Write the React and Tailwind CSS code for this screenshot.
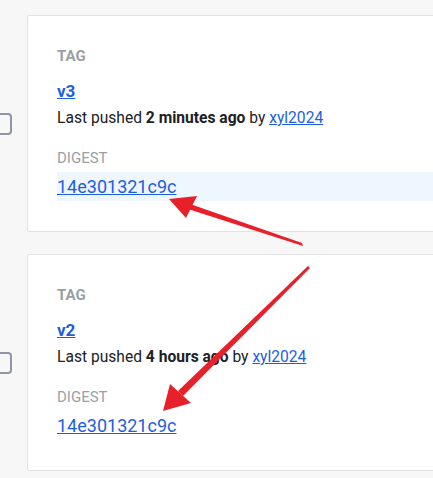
import React from "react";

const tags = [
  { tag: "v3", when: "2 minutes ago", digest: "14e301321c9c", highlight: true },
  { tag: "v2", when: "4 hours ago", digest: "14e301321c9c", highlight: false },
];

const TagCard = ({ item }) => (
  <div className="flex items-center">
    {/* checkbox, cut off by the page edge */}
    <div className="ml-[-10px] w-[22px] h-[22px] rounded-[4px] border-[2.5px] border-[#8e96a4] shrink-0"></div>
    <div className="ml-[15px] w-[440px] shrink-0 bg-white border border-[#e2e2e2] rounded-[2px] pt-[30px] pb-[30px] pl-[29px]">
      <div className="text-[15px] leading-[20px] font-bold text-[#9aa0a6] uppercase">Tag</div>
      <a className="block mt-[13px] text-[17px] leading-[24px] font-bold text-[#1d5ee0] underline">
        {item.tag}
      </a>
      <div className="mt-[5px] text-[15.6px] leading-[20px] text-[#202124]">
        Last pushed <span className="font-bold">{item.when}</span> by{" "}
        <a className="text-[#1d5ee0] underline">xyl2024</a>
      </div>
      <div className="mt-[20px] text-[15px] leading-[20px] text-[#9aa0a6] uppercase">Digest</div>
      <div className={"mt-[4px] h-[29px] leading-[29px] " + (item.highlight ? "bg-[#eef6ff]" : "")}>
        <a className="text-[18px] text-[#1d5ee0] underline">{item.digest}</a>
      </div>
    </div>
  </div>
);

export default function App() {
  return (
    <div
      className="relative w-[433px] h-[478px] overflow-hidden bg-[#f7f7f7] pt-[15px]"
      style={{ fontFamily: "Roboto, 'Liberation Sans', sans-serif" }}
    >
      <div className="flex flex-col gap-[22px]">
        {tags.map((item) => (
          <TagCard key={item.tag} item={item} />
        ))}
      </div>

      {/* red annotation arrows */}
      <svg className="absolute inset-0 pointer-events-none" width="433" height="478" viewBox="0 0 433 478">
        <polygon points="303,246 302,243 190,204 188,209" fill="#e8202a" />
        <polygon points="169,199 197,196 186,218" fill="#e8202a" />
        <polygon points="310,268 308,266 178,391 183,396" fill="#e8202a" />
        <polygon points="163,411 170,384 191,403" fill="#e8202a" />
      </svg>
    </div>
  );
}
